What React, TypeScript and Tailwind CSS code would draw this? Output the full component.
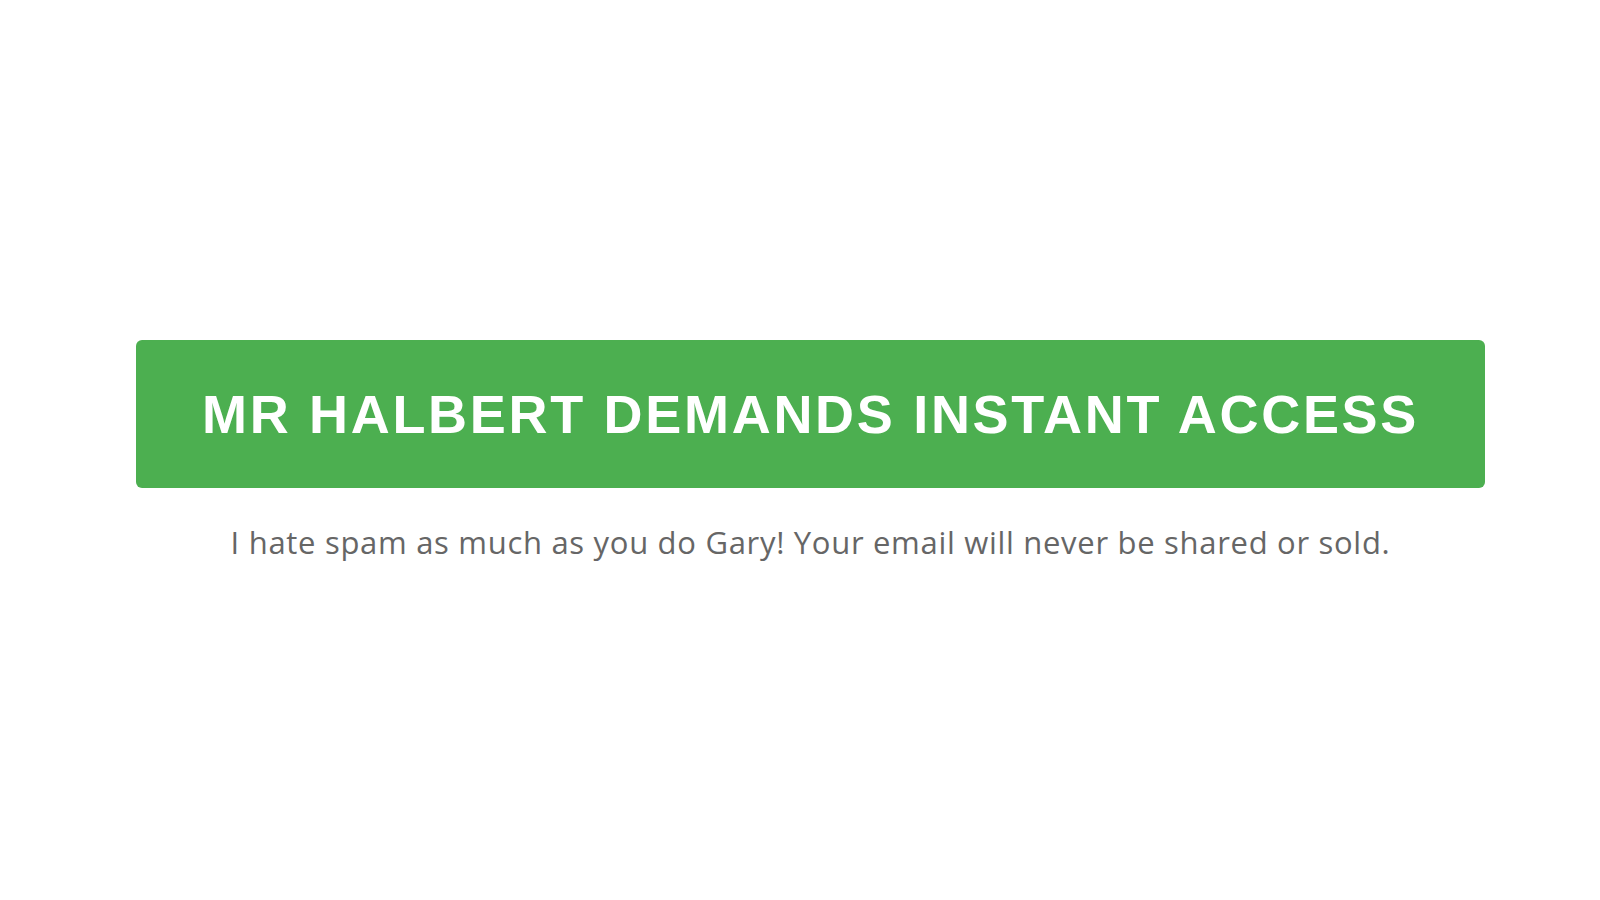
import React from 'react';

const App: React.FC = () => {
  return (
    <div className="bg-white min-h-screen w-full pt-[340px] pl-[136px] pr-[115px]">
      {/* Opt-in CTA */}
      <div className="flex flex-col items-stretch">
        <button className="h-[148px] w-full bg-[#4caf50] rounded-[6px] flex items-center justify-center text-white font-bold text-[54px] tracking-[2.7px] font-['Liberation_Sans',Arial,sans-serif]">
          MR HALBERT DEMANDS INSTANT ACCESS
        </button>
        <p className="mt-[33px] text-center text-[31px] leading-[42px] tracking-[0.7px] text-[#666666] font-['Open_Sans',sans-serif]">
          I hate spam as much as you do Gary! Your email will never be shared or sold.
        </p>
      </div>
    </div>
  );
};

export default App;
